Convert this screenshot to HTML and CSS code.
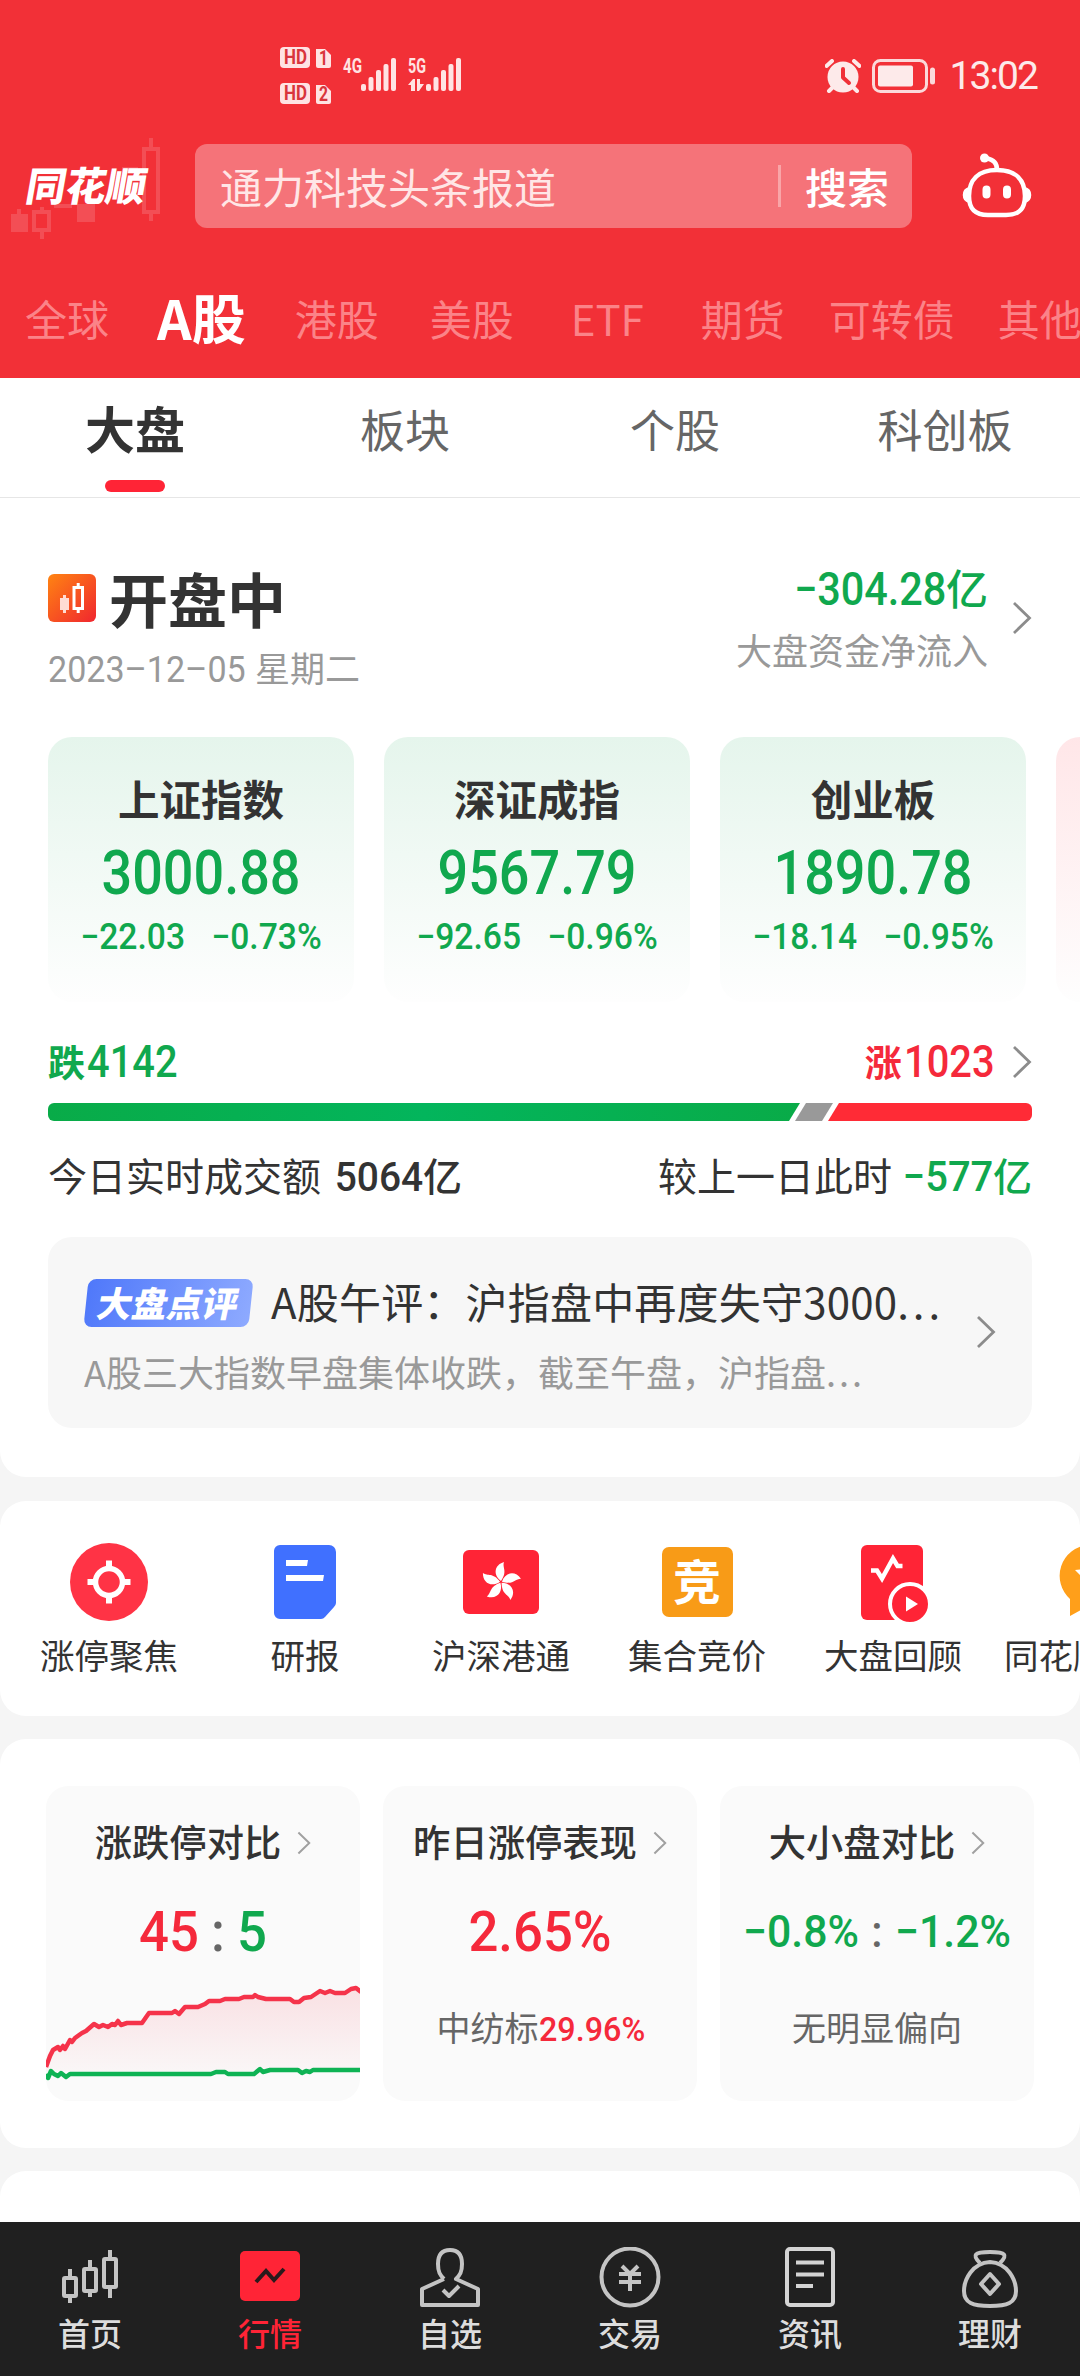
FILE: index.html
```html
<!DOCTYPE html>
<html lang="zh-CN">
<head>
    <meta charset="UTF-8">
    <meta name="viewport" content="width=device-width, initial-scale=1.0">
    <title>同花顺 - A股行情</title>
    <link rel="stylesheet" href="styles.css">
</head>
<body>
    <svg class="defs" width="0" height="0">
        <symbol id="chevron" viewBox="0 0 20 34">
            <path d="M2 2 L17.5 17 L2 32" fill="none" stroke="currentColor" stroke-width="2.8"/>
        </symbol>
    </svg>

    <header>
        <div class="status-bar">
            <svg class="signal" width="184" height="60" viewBox="0 0 184 60">
                <g fill="#ffe3e3">
                    <rect x="0" y="2" width="30" height="21" rx="4"/>
                    <path d="M36 4 h9 l6 6 v11 a2 2 0 0 1 -2 2 h-11 a2 2 0 0 1 -2 -2z"/>
                    <rect x="0" y="38" width="30" height="21" rx="4"/>
                    <path d="M36 40 h9 l6 6 v11 a2 2 0 0 1 -2 2 h-11 a2 2 0 0 1 -2 -2z"/>
                    <rect x="81" y="39" width="5" height="7" rx="2"/>
                    <rect x="88.500" y="32" width="5" height="14" rx="2"/>
                    <rect x="96" y="25" width="5" height="21" rx="2"/>
                    <rect x="103.500" y="19" width="5" height="27" rx="2"/>
                    <rect x="111" y="13" width="5" height="33" rx="2"/>
                    <rect x="146" y="39" width="5" height="7" rx="2"/>
                    <rect x="153.500" y="32" width="5" height="14" rx="2"/>
                    <rect x="161" y="25" width="5" height="21" rx="2"/>
                    <rect x="168.500" y="19" width="5" height="27" rx="2"/>
                    <rect x="176" y="13" width="5" height="33" rx="2"/>
                    <path d="M128 40 l5 -6 h2 v12 h-4 v-6z M137 34 h3 v5 h4 l-5 7 h-2z"/>
                </g>
                <g class="signal-text">
                    <text x="4" y="19" fill="#d9353c" textLength="23" lengthAdjust="spacingAndGlyphs">HD</text>
                    <text x="4" y="55" fill="#d9353c" textLength="23" lengthAdjust="spacingAndGlyphs">HD</text>
                    <text x="39" y="20" fill="#d9353c" textLength="9" lengthAdjust="spacingAndGlyphs">1</text>
                    <text x="39" y="56" fill="#d9353c" textLength="9" lengthAdjust="spacingAndGlyphs">2</text>
                    <text x="63" y="28" fill="#ffe3e3" textLength="19" lengthAdjust="spacingAndGlyphs">4G</text>
                    <text x="128" y="28" fill="#ffe3e3" textLength="18" lengthAdjust="spacingAndGlyphs">5G</text>
                </g>
            </svg>
            <div class="status-right">
                <svg width="36" height="34" viewBox="0 0 36 34">
                    <circle cx="18" cy="18" r="15.500" fill="#fdeaea"/>
                    <path d="M1.500 7 L7 2 M34.500 7 L29 2 M8 28 l-4 4 M28 28 l4 4" stroke="#fdeaea" stroke-width="4" stroke-linecap="round"/>
                    <path d="M18 10 v8.500 l6 5.500" fill="none" stroke="#f03038" stroke-width="4" stroke-linecap="round" stroke-linejoin="round"/>
                </svg>
                <svg class="battery" width="64" height="34" viewBox="0 0 64 34">
                    <rect x="1.500" y="1.500" width="53" height="31" rx="7" fill="none" stroke="#fbd9da" stroke-width="3"/>
                    <rect x="6" y="6.500" width="35" height="21" rx="2" fill="#fdeaea"/>
                    <rect x="58" y="8.500" width="5" height="17" rx="2.500" fill="#fbd9da"/>
                </svg>
                <span class="time">13:02</span>
            </div>
        </div>

        <div class="search-row">
            <div class="logo">
                <svg class="logo-candles" width="160" height="100" viewBox="0 0 160 100" fill="#f34e55">
                    <path d="M11 82 h6 v-5 h4 v5 h7 v18 h-17z M77 72 h18 v18 h-18z M54 72 h18 v4 h-18z M122 35 h16 v4 h-16z"/>
                    <path d="M34 80 h15 v18 h-15z M144 17 h14 v63 h-14z M42 75 v4 M42 99 v8 M151 6 v10 M151 81 v8" fill="none" stroke="#f34e55" stroke-width="4"/>
                </svg>
                <span>同花顺</span>
            </div>
            <div class="search-box">
                <span class="search-hint">通力科技头条报道</span>
                <span class="search-btn">搜索</span>
            </div>
            <svg class="robot" width="72" height="66" viewBox="0 0 72 66" fill="none" stroke="#fff" stroke-width="4.500">
                <path d="M36 17 C55 17 64 27 64 43 C64 57 57 62 45 62 H27 C15 62 8 57 8 43 C8 27 17 17 36 17z"/>
                <path d="M36 17 C36 10 33 7 25 5" stroke-width="4.500"/>
                <circle cx="23.500" cy="5" r="4.500" fill="#fff" stroke="none"/>
                <path d="M8 35 C1 37 1 47 8 49z M64 35 C71 37 71 47 64 49z" fill="#fff" stroke-width="2"/>
                <path d="M25.500 36.500 v5 M46 36.500 v5" stroke-width="8" stroke-linecap="round"/>
            </svg>
        </div>

        <nav class="markets">
            <a class="m-global">全球</a>
            <a class="m-a active">A股</a>
            <a class="m-hk">港股</a>
            <a class="m-us">美股</a>
            <a class="m-etf">ETF</a>
            <a class="m-futures">期货</a>
            <a class="m-bond">可转债</a>
            <a class="m-other">其他</a>
        </nav>
    </header>

    <div class="tabs">
        <a class="active">大盘</a>
        <a>板块</a>
        <a>个股</a>
        <a>科创板</a>
    </div>

    <main>
        <section class="panel overview">
            <div class="overview-head">
                <div>
                    <h1>
                        <svg width="48" height="48" viewBox="0 0 48 48">
                            <defs>
                                <linearGradient id="open" x1="0" y1="0" x2="1" y2="1">
                                    <stop offset="0" stop-color="#ff8412"/>
                                    <stop offset="1" stop-color="#f0262f"/>
                                </linearGradient>
                            </defs>
                            <rect width="48" height="48" rx="6" fill="url(#open)"/>
                            <path d="M12 24 h3 v-3 h3 v3 h3 v12 h-3 v3 h-3 v-3 h-3z" fill="#ffdcd3"/>
                            <path d="M26 13.500 h8.500 v21 h-8.500z M30.200 9 v4 M30.200 35 v4" fill="none" stroke="#fff" stroke-width="3"/>
                        </svg>
                        开盘中
                    </h1>
                    <p class="date"><span class="num">2023–12–05</span>星期二</p>
                </div>
                <div class="flow">
                    <div>
                        <p class="flow-value green"><span class="num">−304.28</span>亿</p>
                        <p class="flow-label">大盘资金净流入</p>
                    </div>
                    <svg class="chevron"><use href="#chevron"/></svg>
                </div>
            </div>

            <div class="indexes">
                <div class="index-card">
                    <h2>上证指数</h2>
                    <p class="price num">3000.88</p>
                    <p class="change num"><span>−22.03</span><span>−0.73%</span></p>
                </div>
                <div class="index-card">
                    <h2>深证成指</h2>
                    <p class="price num">9567.79</p>
                    <p class="change num"><span>−92.65</span><span>−0.96%</span></p>
                </div>
                <div class="index-card">
                    <h2>创业板</h2>
                    <p class="price num">1890.78</p>
                    <p class="change num"><span>−18.14</span><span>−0.95%</span></p>
                </div>
                <div class="index-card up"></div>
            </div>

            <div class="breadth">
                <p class="green">跌<span class="num">4142</span></p>
                <p class="rise red">涨<span class="num">1023</span><svg class="chevron"><use href="#chevron"/></svg></p>
            </div>
            <svg class="breadth-bar" width="984" height="18" viewBox="0 0 984 18">
                <defs>
                    <linearGradient id="down">
                        <stop offset="0" stop-color="#09ab48"/>
                        <stop offset="0.500" stop-color="#03b55c"/>
                        <stop offset="1" stop-color="#09ab48"/>
                    </linearGradient>
                </defs>
                <path d="M6 0 H752 L741 18 H6 A6 6 0 0 1 0 12 V6 A6 6 0 0 1 6 0z" fill="url(#down)"/>
                <path d="M758 0 H785 L774 18 H747z" fill="#999"/>
                <path d="M791 0 H978 A6 6 0 0 1 984 6 V12 A6 6 0 0 1 978 18 H780z" fill="#ff2b36"/>
            </svg>
            <div class="turnover">
                <p>今日实时成交额 <b><span class="num">5064</span>亿</b></p>
                <p>较上一日此时 <b class="green"><span class="num">−577</span>亿</b></p>
            </div>

            <div class="comment">
                <div>
                    <p class="comment-title"><span class="tag"><em>大盘点评</em></span>A股午评：沪指盘中再度失守3000<span class="dots">...</span></p>
                    <p class="comment-text">A股三大指数早盘集体收跌，截至午盘，沪指盘<span class="dots">...</span></p>
                </div>
                <svg class="chevron"><use href="#chevron"/></svg>
            </div>
        </section>

        <section class="panel shortcuts">
            <a>
                <svg width="80" height="80" viewBox="0 0 80 80">
                    <circle cx="40" cy="40" r="39" fill="#ff3345"/>
                    <circle cx="40" cy="40" r="13.500" fill="none" stroke="#fff" stroke-width="5.500"/>
                    <path d="M40 18.500 v8 M40 53 v8.500 M18.500 40 h8 M53 40 h8.500" stroke="#fff" stroke-width="6"/>
                </svg>
                涨停聚焦
            </a>
            <a>
                <svg width="80" height="80" viewBox="0 0 80 80">
                    <path d="M15 3 h49 a7 7 0 0 1 7 7 v51 a6 6 0 0 1 -2 4 l-9 10 a6 6 0 0 1 -4 2 h-41 a6 6 0 0 1 -6 -6 v-62 a6 6 0 0 1 6 -6z" fill="#4070ff"/>
                    <path d="M21 18 h22 l-1 6 h-21z M21 33 h38 l-1 6 h-37z" fill="#fff"/>
                </svg>
                研报
            </a>
            <a>
                <svg width="80" height="80" viewBox="0 0 80 80">
                    <rect x="2" y="8" width="76" height="64" rx="6" fill="#ff2436"/>
                    <g fill="#fff">
                        <path id="petal" d="M40 39 C32 33 33 23 43 20 C41 26 47 29 40 39z"/>
                        <use href="#petal" transform="rotate(72 40 40)"/>
                        <use href="#petal" transform="rotate(144 40 40)"/>
                        <use href="#petal" transform="rotate(216 40 40)"/>
                        <use href="#petal" transform="rotate(288 40 40)"/>
                    </g>
                </svg>
                沪深港通
            </a>
            <a>
                <svg width="80" height="80" viewBox="0 0 80 80">
                    <rect x="5" y="5" width="71" height="70" rx="7" fill="#f89b17"/>
                    <text class="jing" x="40" y="57.500" text-anchor="middle">竞</text>
                </svg>
                集合竞价
            </a>
            <a>
                <svg width="80" height="80" viewBox="0 0 80 80">
                    <rect x="8" y="3" width="62" height="75" rx="6" fill="#ff2436"/>
                    <path d="M18 28.500 h6 l5 8 l11 -20 l4.500 7.500 h5" fill="none" stroke="#fff" stroke-width="4.500"/>
                    <circle cx="57" cy="62" r="20" fill="#ff2436" stroke="#fff" stroke-width="4"/>
                    <path d="M53 54.500 L65 62 L53 69.500z" fill="#fff"/>
                </svg>
                大盘回顾
            </a>
            <a class="cut">
                <svg width="80" height="80" viewBox="0 0 80 80">
                    <path d="M38 3 a31 31 0 0 0 -18 54 v17 l18 -10 a31 31 0 0 0 0 -61z" fill="#ff9f1a"/>
                    <path d="M38 18 l4 9 l9 1 l-7 7 l2 9 l-8 -5 l-8 5 l2 -9 l-7 -7 l9 -1z" fill="#fff"/>
                </svg>
                同花顺
            </a>
        </section>

        <section class="panel compare">
            <div class="compare-card">
                <h3>涨跌停对比<svg class="chevron"><use href="#chevron"/></svg></h3>
                <p class="figure num"><span class="red">45</span><i>:</i><span class="green">5</span></p>
                <svg class="trend" width="315" height="110" viewBox="0 0 315 110">
                    <defs>
                        <linearGradient id="area" x1="0" y1="0" x2="0" y2="1">
                            <stop offset="0" stop-color="#f5334a" stop-opacity="0.130"/>
                            <stop offset="1" stop-color="#f5334a" stop-opacity="0.020"/>
                        </linearGradient>
                    </defs>
                    <path d="M0 87 L7 70 L12 67 L15 70 L22 61 L36 53 L48 44 L96 43 L103 33 L133 33 L139 27 L152 27 L163 21 L198 17 L212 17 L244 19 L253 22 L274 11 L299 13 L310 8 L315 12 V91 H0z" fill="url(#area)"/>
                    <polyline points="0,87 4,76 7,70 12,67 14,70 17,66 19,69 24,60 26,62 29,58 36,53 40,51 48,44 53,47 57,45 62,47 66,44 69,45 72,41 75,45 81,43 96,43 103,33 126,33 129,31 133,34 139,27 152,27 159,24 163,21 174,21 179,19 193,19 198,17 207,17 209,15 212,17 220,19 244,19 248,22 253,22 258,18 265,17 274,11 279,13 284,11 289,13 299,13 305,9 310,8 315,12" fill="none" stroke="#f5334a" stroke-width="4.500" stroke-linejoin="round"/>
                    <polyline points="0,94 2,98 5,91 8,94 12,96 15,93 20,97 24,94 165,94 170,92 179,92 182,94 208,94 214,89 217,92 224,90 252,90 256,93 260,91 264,92 267,90 315,90" fill="none" stroke="#0eb354" stroke-width="4.500" stroke-linejoin="round"/>
                </svg>
            </div>
            <div class="compare-card">
                <h3>昨日涨停表现<svg class="chevron"><use href="#chevron"/></svg></h3>
                <p class="figure num red">2.65%</p>
                <p class="note">中纺标<span class="num red">29.96%</span></p>
            </div>
            <div class="compare-card">
                <h3>大小盘对比<svg class="chevron"><use href="#chevron"/></svg></h3>
                <p class="figure small num green">−0.8%<i>:</i>−1.2%</p>
                <p class="note">无明显偏向</p>
            </div>
        </section>

        <section class="panel next"></section>
    </main>

    <footer>
        <a>
            <svg width="64" height="64" viewBox="0 0 64 64" fill="none" stroke="#c4c4c4" stroke-width="4">
                <rect x="6" y="31" width="12" height="18" rx="1"/>
                <rect x="26" y="22" width="12" height="22" rx="1"/>
                <rect x="46" y="12" width="12" height="28" rx="1"/>
                <path d="M12 22 v9 M12 49 v7 M32 13 v9 M32 44 v6 M52 3 v9 M52 40 v11"/>
            </svg>
            首页
        </a>
        <a class="active">
            <svg width="64" height="64" viewBox="0 0 64 64">
                <rect x="2" y="4" width="60" height="50" rx="5" fill="#ff2436"/>
                <path d="M18 35 L28 24 L36 33 L46 22" fill="none" stroke="#2a1a1c" stroke-width="4"/>
            </svg>
            行情
        </a>
        <a>
            <svg width="64" height="64" viewBox="0 0 64 64" fill="none" stroke="#c4c4c4" stroke-width="4" stroke-linejoin="round">
                <path d="M26 32 C22 28 20 25 20 17 C20 7 25 3 32 3 C39 3 44 7 44 17 C44 25 42 28 38 32 L60 42 V58 H4 V42 L26 32"/>
                <path d="M25 43 L31 49 L41 39"/>
            </svg>
            自选
        </a>
        <a>
            <svg width="64" height="64" viewBox="0 0 64 64" fill="none" stroke="#c4c4c4" stroke-width="4">
                <circle cx="32" cy="30" r="28.500"/>
                <path d="M24 19 L32 27 L40 19 M21 27 h22 M21 35 h22 M32 27 v17"/>
            </svg>
            交易
        </a>
        <a>
            <svg width="64" height="64" viewBox="0 0 64 64" fill="none" stroke="#d4d4d4" stroke-width="4">
                <rect x="9" y="2" width="46" height="56" rx="3"/>
                <path d="M18 15.500 h28 M18 27.500 h28 M18 39 h17"/>
            </svg>
            资讯
        </a>
        <a>
            <svg width="64" height="64" viewBox="0 0 64 64" fill="none" stroke="#c4c4c4" stroke-width="4" stroke-linejoin="round">
                <path d="M22 16 C14 8 16 5 32 5 C48 5 50 8 42 16"/>
                <path d="M32 15 C50 16 58 33 58 44 C58 56 49 59 32 59 C15 59 6 56 6 44 C6 33 14 16 32 15z"/>
                <path d="M32 27 L41 37 L32 47 L23 37z"/>
            </svg>
            理财
        </a>
    </footer>
</body>
</html>
```
FILE: styles.css
```css
* {
    box-sizing: border-box;
}

body {
    font-family: "Noto Sans CJK SC", sans-serif;
    background: #f5f5f5;
    color: #333;
    margin: 0;
    width: 1080px;
    height: 2376px;
    display: flex;
    flex-direction: column;
    overflow: hidden;
}

h1, h2, h3, p {
    margin: 0;
}

svg {
    display: block;
    flex-shrink: 0;
}

.defs {
    position: absolute;
}

/* Numbers are drawn slightly condensed */
.num {
    font-family: Roboto, sans-serif;
}

span.num {
    display: inline-block;
    line-height: 1;
}

.green {
    color: #10a84e;
}

.red {
    color: #f5293b;
}

.chevron {
    width: 20px;
    height: 34px;
    color: #8c8c8c;
}

/* Header */
header {
    background: #f23037;
    color: #fff;
    height: 378px;
    flex-shrink: 0;
}

.status-bar {
    height: 144px;
    padding: 45px 43px 0 280px;
    display: flex;
    justify-content: space-between;
}

.signal-text {
    font-family: Roboto, sans-serif;
    font-weight: bold;
    font-size: 20px;
}

.status-right {
    display: flex;
    align-items: center;
    height: 62px;
}

.battery {
    margin: 0 13px 0 11px;
}

.time {
    font-family: Roboto, sans-serif;
    font-size: 39px;
    letter-spacing: -1.9px;
    color: #fdeaea;
}

.search-row {
    display: flex;
    align-items: center;
    height: 84px;
}

.logo {
    position: relative;
    width: 195px;
    padding-left: 27px;
    font-size: 40px;
    font-weight: 900;
    line-height: 80px;
}

.logo span {
    position: relative;
    top: -2px;
    display: inline-block;
    transform: skewX(-10deg);
}

.logo-candles {
    position: absolute;
    left: 0;
    top: -14px;
    overflow: visible;
}

.search-box {
    display: flex;
    justify-content: space-between;
    align-items: center;
    width: 717px;
    height: 84px;
    padding: 0 23px 0 25px;
    border-radius: 12px;
    background: #f57379;
    font-size: 42px;
    line-height: 80px;
}

.search-hint {
    color: #ffe6e6;
}

.search-btn {
    line-height: 42px;
    padding-left: 24px;
    border-left: 3px solid #f9a5a8;
    font-weight: 500;
}

.robot {
    margin-left: 49px;
}

.markets {
    display: flex;
    height: 150px;
    padding-left: 25px;
    font-size: 42px;
    line-height: 179px;
    white-space: nowrap;
    color: #fb8388;
}

.markets .active {
    font-size: 54px;
    font-weight: bold;
    line-height: 177px;
    color: #fff;
}

.m-a { margin-left: 48px; }
.m-hk { margin-left: 49px; }
.m-us { margin-left: 51px; }
.m-etf { margin-left: 57px; }
.m-futures { margin-left: 57px; }
.m-bond { margin-left: 44px; }
.m-other { margin-left: 43px; }

.tabs {
    display: grid;
    grid-template-columns: repeat(4, 1fr);
    height: 120px;
    flex-shrink: 0;
    background: #fff;
    border-bottom: 1px solid #e6e6e6;
    text-align: center;
    font-size: 45px;
    line-height: 101px;
    color: #666;
}

.tabs .active {
    font-size: 50px;
    font-weight: bold;
    line-height: 98px;
    color: #333;
}

.tabs .active::after {
    content: "";
    display: block;
    width: 60px;
    height: 12px;
    margin: 4px auto 0;
    border-radius: 6px;
    background: #ff2436;
}

/* Panels */
main {
    flex: 1;
    overflow: hidden;
}

.panel {
    background: #fff;
    border-radius: 26px;
    margin-bottom: 23px;
    overflow: hidden;
}

.overview {
    height: 979px;
    padding: 62px 48px 0;
    border-radius: 0 0 26px 26px;
    margin-bottom: 24px;
}

.overview-head {
    display: flex;
    justify-content: space-between;
    height: 177px;
}

h1 {
    display: flex;
    align-items: center;
    gap: 13px;
    font-size: 59px;
    line-height: 76px;
}

.date {
    font-size: 35px;
    line-height: 61px;
    color: #999;
}

.date .num {
    font-size: 37px;
    margin-right: -8px;
    transform: scaleX(0.92);
    transform-origin: left;
}

.flow {
    display: flex;
    align-items: flex-start;
    gap: 24px;
    text-align: right;
}

.flow .chevron {
    margin-top: 41px;
}

.flow-value {
    font-size: 42px;
    font-weight: 500;
    line-height: 54px;
}

.flow-value .num {
    font-size: 46px;
    transform: scaleX(0.9);
    transform-origin: right;
}

.flow-label {
    font-size: 36px;
    line-height: 71px;
    color: #999;
}

.indexes {
    display: flex;
    gap: 30px;
    width: 1032px;
}

.index-card {
    width: 306px;
    height: 265px;
    flex-shrink: 0;
    padding-top: 34px;
    border-radius: 24px;
    background: linear-gradient(#e5f5ec, #fefefe);
    text-align: center;
    color: #10a84e;
}

.index-card.up {
    background: linear-gradient(#ffe6e8, #fefefe);
}

.index-card h2 {
    font-size: 41.500px;
    line-height: 54px;
    color: #333;
}

.price {
    font-size: 61px;
    font-weight: 500;
    line-height: 97px;
    transform: scaleX(0.885);
}

.change {
    display: flex;
    justify-content: center;
    gap: 28px;
    font-size: 36px;
    font-weight: 500;
    line-height: 30px;
    transform: scaleX(0.935);
}

.breadth {
    display: flex;
    justify-content: space-between;
    align-items: flex-start;
    height: 101px;
    font-size: 37px;
    font-weight: bold;
    line-height: 119px;
}

.breadth .num {
    font-size: 45px;
    font-weight: 500;
    margin-left: 2px;
    transform: scaleX(0.885);
    transform-origin: left;
}

.rise {
    display: flex;
    align-items: baseline;
}

.rise .num {
    margin-right: -11px;
}

.rise .chevron {
    align-self: center;
    margin-left: 17px;
}

.turnover {
    display: flex;
    justify-content: space-between;
    height: 116px;
    font-size: 39px;
    line-height: 106px;
}

.turnover b {
    font-weight: 500;
}

.turnover .num {
    font-size: 41px;
    transform: scaleX(0.95);
    transform-origin: right;
}

.turnover .green .num {
    font-size: 42px;
    margin-left: -3px;
}

.comment {
    display: flex;
    justify-content: space-between;
    height: 191px;
    padding: 29px 36px 0;
    border-radius: 24px;
    background: #f7f7f7;
}

.comment .chevron {
    margin-top: 49px;
}

.comment-title {
    display: flex;
    align-items: center;
    height: 68px;
    font-size: 42px;
    letter-spacing: 0.200px;
    white-space: nowrap;
}

.tag {
    width: 165px;
    height: 48px;
    margin: 5px 20px 0 2px;
    border-radius: 8px;
    transform: skewX(-6deg);
    background: linear-gradient(100deg, #4f78fa, #8eaaff);
    color: #fff;
    font-size: 35px;
    font-weight: 900;
    line-height: 46px;
    text-align: center;
}

.tag em {
    display: inline-block;
    font-style: normal;
    transform: skewX(-6deg);
}

.comment-title .dots {
    letter-spacing: 4px;
}

.comment-text .dots {
    letter-spacing: 3px;
}

.comment-text {
    font-size: 36px;
    line-height: 74px;
    color: #999;
}

/* Shortcuts */
.shortcuts {
    display: flex;
    height: 215px;
    padding: 41px 0 0 11px;
}

.shortcuts a {
    display: flex;
    flex-direction: column;
    align-items: center;
    width: 196px;
    flex-shrink: 0;
    font-size: 34.500px;
    line-height: 65px;
}

.shortcuts .cut {
    align-items: flex-start;
    padding-left: 13px;
}

.cut svg {
    margin-left: 46px;
}

.jing {
    font-size: 48px;
    font-weight: bold;
    fill: #fff;
}

/* Compare cards */
.compare {
    display: flex;
    gap: 23px;
    height: 409px;
    padding: 47px 46px 0;
}

.compare-card {
    width: 314px;
    height: 315px;
    padding-top: 28px;
    border-radius: 22px;
    background: #fafafa;
    text-align: center;
    overflow: hidden;
}

.compare-card h3 {
    display: flex;
    justify-content: center;
    align-items: center;
    font-size: 37.300px;
    font-weight: 500;
    line-height: 54px;
}

.compare-card .chevron {
    width: 14px;
    height: 24px;
    margin: 4px 0 0 16px;
    color: #a0a0a0;
}

.figure {
    height: 112px;
    font-size: 56px;
    font-weight: 500;
    line-height: 128px;
    transform: scaleX(0.94);
}

.figure.small {
    font-size: 45px;
    transform: scaleX(0.95);
}

.figure i {
    font-style: normal;
    color: #666;
    margin: 0 13px;
}

.note {
    font-size: 34px;
    line-height: 93px;
    color: #666;
}

.note .num {
    font-weight: 500;
    margin-right: -7px;
    transform: scaleX(0.95);
    transform-origin: left;
}

.next {
    height: 80px;
}

/* Bottom navigation */
footer {
    display: grid;
    grid-template-columns: repeat(6, 1fr);
    height: 154px;
    flex-shrink: 0;
    padding-top: 25px;
    background: #202020;
    color: #ddd;
}

footer a {
    display: flex;
    flex-direction: column;
    align-items: center;
    font-size: 32px;
    font-weight: 500;
    line-height: 42px;
}

footer .active {
    color: #ff2436;
}
```
